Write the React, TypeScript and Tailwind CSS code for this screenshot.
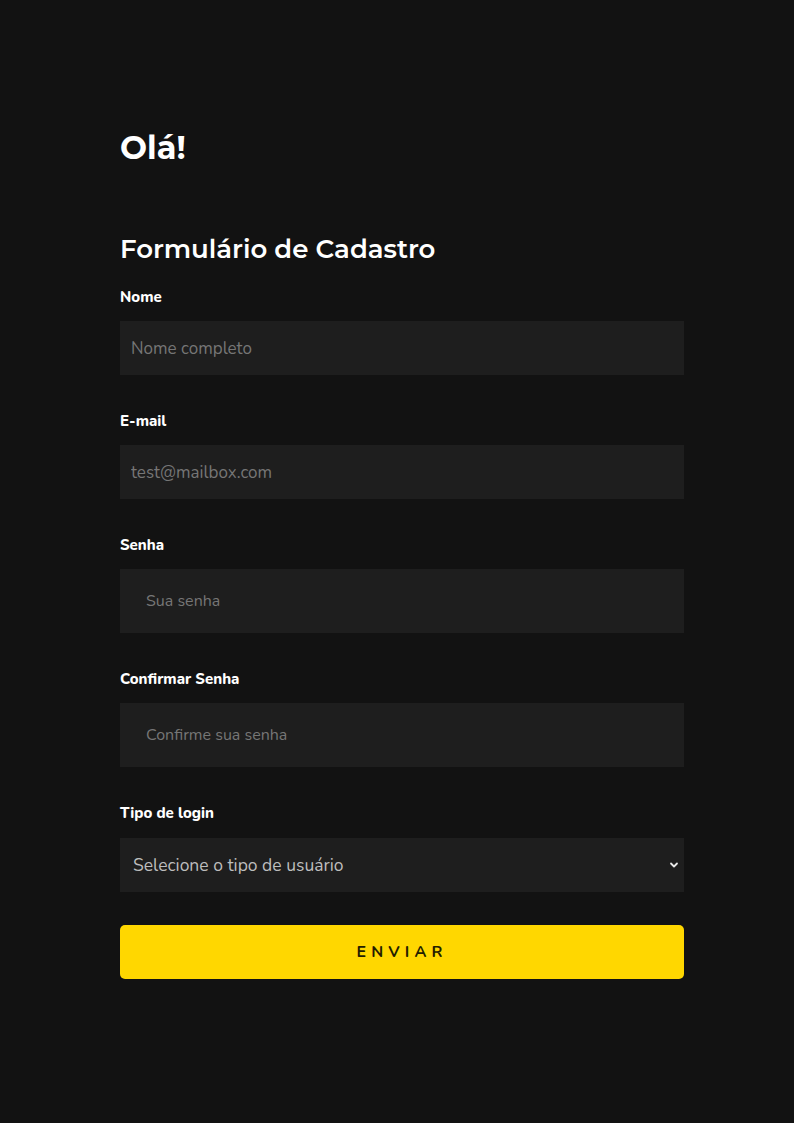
import { useState } from "react";

const heading = "font-['Montserrat','Inter',sans-serif]";
const body = "font-['Nunito','Lato',sans-serif]";

function Field({
  label,
  placeholder,
  type = "text",
  tall = false,
}: {
  label: string;
  placeholder: string;
  type?: string;
  tall?: boolean;
}) {
  return (
    <div className="flex flex-col">
      <label className="h-5 text-[15px] font-extrabold leading-5 text-white">
        {label}
      </label>
      <input
        type={type}
        placeholder={placeholder}
        className={
          tall
            ? "mt-[14px] h-[64px] w-full bg-[#1e1e1e] px-[26px] text-[16px] text-[#e0e0e0] outline-none placeholder:text-[#767676]"
            : "mt-[14px] h-[54px] w-full bg-[#1e1e1e] px-[11px] text-[17px] text-[#e0e0e0] outline-none placeholder:text-[#767676]"
        }
      />
    </div>
  );
}

export default function App() {
  const [tipo, setTipo] = useState("");

  return (
    <main className={`min-h-screen bg-[#121212] ${body}`}>
      <div className="ml-[120px] w-[564px] pt-[128px]">
        <h1
          className={`h-10 text-[32px] font-bold leading-10 text-white ${heading}`}
        >
          Olá!
        </h1>

        <h2
          className={`mt-[65px] h-8 text-[26px] font-semibold leading-8 text-white ${heading}`}
        >
          Formulário de Cadastro
        </h2>

        <form
          className="mt-[22px] flex flex-col gap-[36px]"
          onSubmit={(e) => e.preventDefault()}
        >
          <Field label="Nome" placeholder="Nome completo" />
          <Field label="E-mail" type="email" placeholder="test@mailbox.com" />
          <Field label="Senha" type="password" placeholder="Sua senha" tall />
          <Field
            label="Confirmar Senha"
            type="password"
            placeholder="Confirme sua senha"
            tall
          />

          <div className="flex flex-col">
            <label className="h-5 text-[15px] font-extrabold leading-5 text-white">
              Tipo de login
            </label>
            <div className="relative mt-[15px]">
              <select
                value={tipo}
                onChange={(e) => setTipo(e.target.value)}
                className="h-[54px] w-full appearance-none bg-[#1e1e1e] px-[13px] text-[17.5px] text-[#bdbdbd] outline-none"
              >
                <option value="">Selecione o tipo de usuário</option>
                <option value="aluno">Aluno</option>
                <option value="professor">Professor</option>
              </select>
              <svg
                className="pointer-events-none absolute right-[5px] top-1/2 -translate-y-1/2"
                width="10"
                height="10"
                viewBox="0 0 10 10"
                fill="none"
              >
                <path
                  d="M2 3.5 5 6.5 8 3.5"
                  stroke="#e8e8e8"
                  strokeWidth="1.8"
                  strokeLinecap="round"
                  strokeLinejoin="round"
                />
              </svg>
            </div>
          </div>

          <button
            type="submit"
            className={`-mt-[3px] h-[54px] w-full rounded-[5px] bg-[#ffd700] text-[16px] font-bold tracking-[0.32em] text-[#231d00] ${body}`}
          >
            ENVIAR
          </button>
        </form>
      </div>
    </main>
  );
}
